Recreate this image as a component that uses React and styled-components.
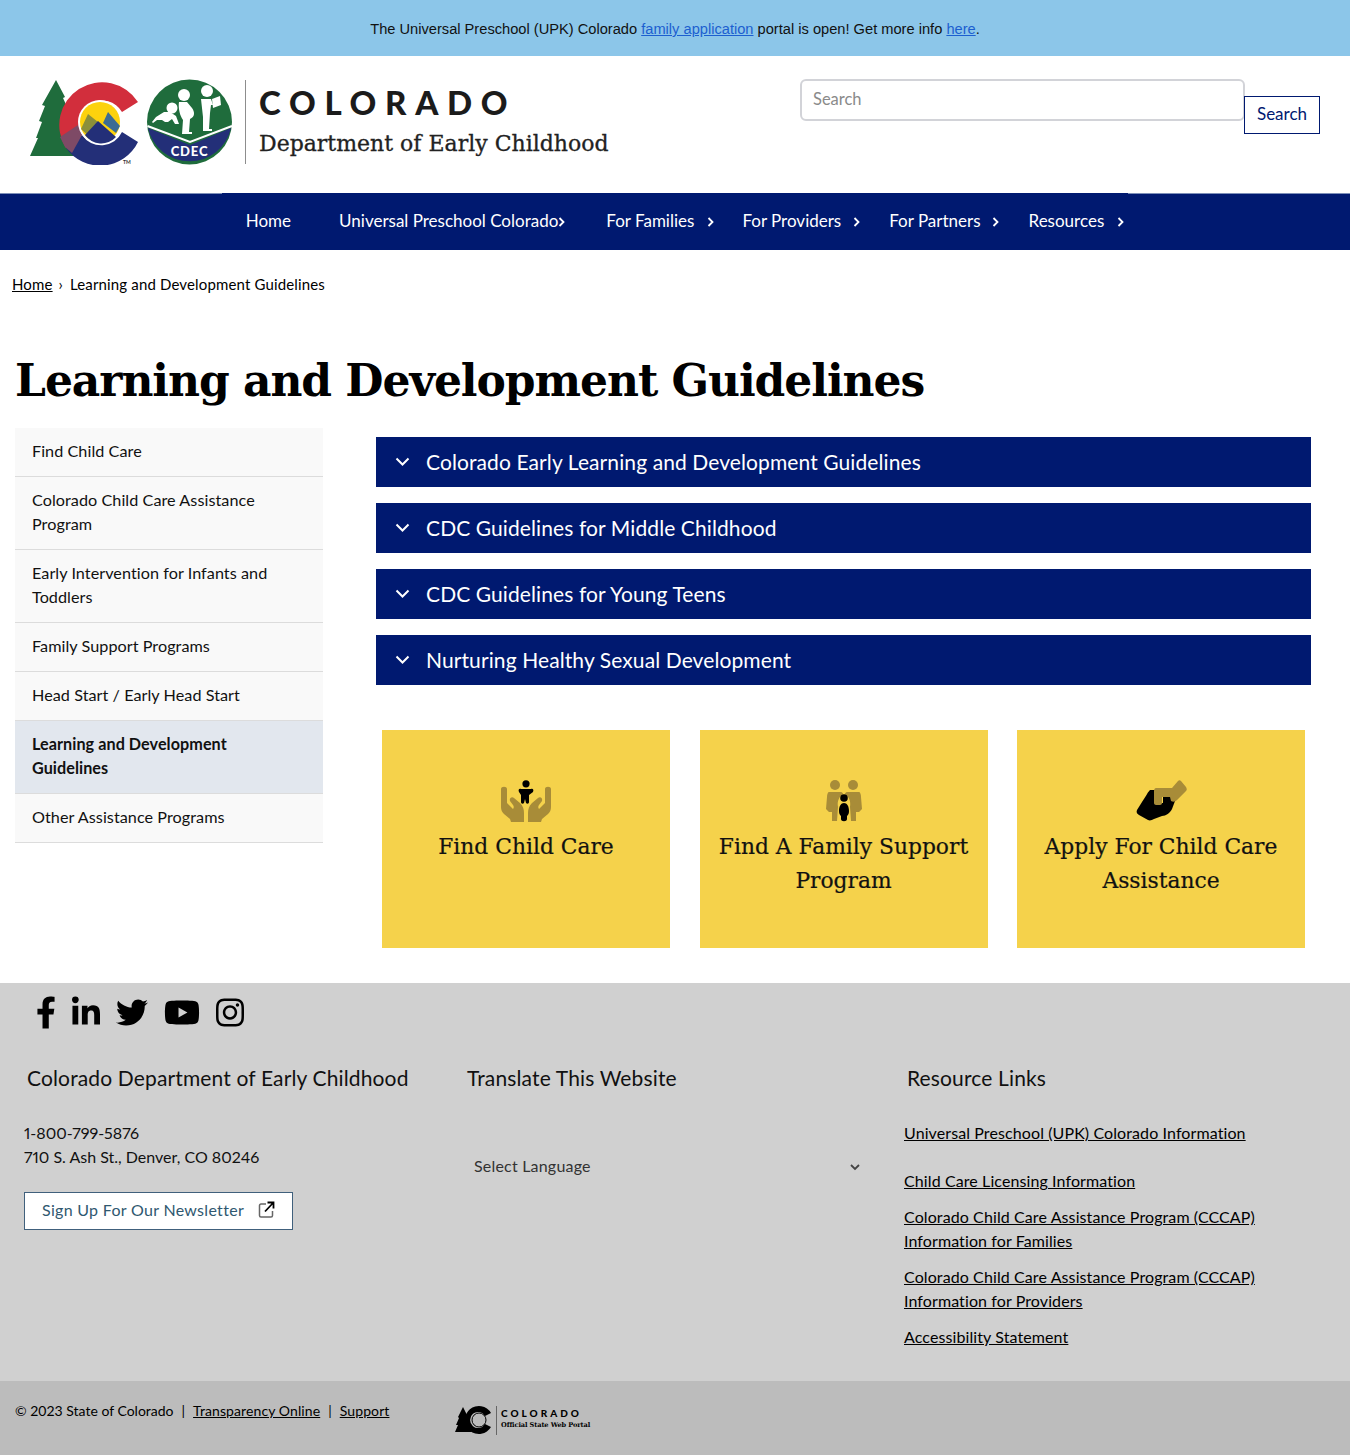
import React from 'react';
import styled, { createGlobalStyle } from 'styled-components';
import { FaFacebookF, FaLinkedinIn, FaTwitter, FaYoutube, FaInstagram } from 'react-icons/fa';

const colors = {
    navy: '#001970',
    sky: '#8cc6e9',
    yellow: '#f5d24b',
    bronze: '#a88c38',
    footer: '#d0d0d0',
    footerBottom: '#bcbcbc',
};

const sans = '"Lato", "Noto Sans", sans-serif';
const slab = '"DejaVu Serif", "Liberation Serif", serif';

const GlobalStyle = createGlobalStyle`
    html, body {
        margin: 0;
        padding: 0;
        background: #fff;
        color: #000;
        font-family: ${sans};
        font-size: 16px;
    }
    * { box-sizing: border-box; }
`;

const Banner = styled.div`
    height: 56px;
    background: ${colors.sky};
    display: flex;
    align-items: center;
    justify-content: center;
    padding-top: 2px;
    font-family: "Liberation Sans", Arial, sans-serif;
    font-size: 14.65px;
    color: #111;
    a { color: #1c5fd0; text-decoration: underline; }
`;

const Header = styled.header`
    height: 137px;
    display: flex;
    justify-content: space-between;
    padding: 23px 30px 0;
`;

const Logo = styled.div`
    display: flex;
    align-items: flex-start;
`;

const LogoWords = styled.div`
    display: flex;
    flex-direction: column;
    margin-left: 13px;
    padding-top: 3px;
`;

const LogoState = styled.div`
    font-weight: 900;
    font-size: 33px;
    line-height: 40px;
    letter-spacing: 8.7px;
    color: #1b1b1b;
`;

const LogoDept = styled.div`
    font-family: ${slab};
    font-size: 22px;
    line-height: 44px;
    color: #222;
    -webkit-text-stroke: 0.3px #222;
`;

const SearchForm = styled.form`
    display: flex;
    align-items: flex-start;
`;

const SearchInput = styled.input`
    width: 445px;
    height: 42px;
    border: 2px solid #d2d3d8;
    border-radius: 6px;
    padding: 0 11px 3px;
    font-family: ${sans};
    font-size: 16.500px;
    &::placeholder { color: #8a8a8a; }
`;

const SearchButton = styled.button`
    width: 76px;
    height: 38px;
    margin-top: 17px;
    margin-left: -1px;
    padding: 0 0 3px;
    background: #fff;
    border: 1px solid ${colors.navy};
    color: ${colors.navy};
    font-family: ${sans};
    font-size: 17px;
`;

const NavBar = styled.nav`
    height: 57px;
    background:
        linear-gradient(to right, #7d8fb8 222px, ${colors.navy} 222px, ${colors.navy} 1128px, #7d8fb8 1128px) top / 100% 1px no-repeat,
        ${colors.navy};
    display: flex;
    justify-content: center;
`;

const NavList = styled.div`
    display: flex;
    align-items: center;
`;

const NavItem = styled.a`
    position: relative;
    margin: 0 24px;
    color: #fff;
    font-size: 17px;
    line-height: 24px;
    padding-bottom: 1px;
`;

const NavChevron = styled.svg`
    position: absolute;
    top: 8px;
    left: calc(100% + ${p => p.$offset}px);
    width: 7px;
    height: 10px;
`;

const Crumbs = styled.div`
    display: flex;
    align-items: center;
    padding: 10px 12px 0;
    height: 58px;
    font-size: 15px;
    letter-spacing: 0.15px;
    a { color: #000; text-decoration: underline; }
`;

const CrumbSep = styled.span`
    margin: 0 7px 0 6px;
`;

const Title = styled.h1`
    margin: 0;
    padding: 45px 15px 0;
    height: 120px;
    font-family: ${slab};
    font-size: 44px;
    line-height: 56px;
    letter-spacing: -1.05px;
    font-weight: 700;
    color: #000;
`;

const Columns = styled.div`
    display: flex;
    align-items: flex-start;
    padding-left: 15px;
    height: 555px;
`;

const Sidebar = styled.aside`
    width: 308px;
    flex: none;
`;

const SideLink = styled.a`
    display: block;
    padding: 11px 31px 13px 17px;
    background: ${p => (p.$active ? '#e2e7ee' : '#f9f9f9')};
    border-bottom: 1px solid #dcdcdc;
    font-size: 16.200px;
    line-height: 24px;
    letter-spacing: 0.05px;
    font-weight: ${p => (p.$active ? 700 : 400)};
    color: #111;
`;

const Main = styled.main`
    margin-left: 53px;
    width: 935px;
    padding-top: 9px;
`;

const Accordion = styled.div`
    display: flex;
    flex-direction: column;
    gap: 16px;
`;

const AccordionRow = styled.div`
    height: 50px;
    background: ${colors.navy};
    display: flex;
    align-items: center;
    padding: 0 0 2px 19px;
    color: #fff;
    font-size: 21px;
    letter-spacing: 0.1px;
`;

const AccordionChevron = styled.svg`
    width: 15px;
    height: 9px;
    margin-right: 16px;
`;

const Cards = styled.div`
    display: grid;
    grid-template-columns: repeat(3, 288px);
    column-gap: 29.5px;
    margin: 45px 0 0 6px;
`;

const Card = styled.a`
    height: 218px;
    background: ${colors.yellow};
    display: flex;
    flex-direction: column;
    align-items: center;
    padding: 50px 15px 0;
    text-align: center;
    font-family: ${slab};
    font-size: 21.800px;
    line-height: 34px;
    color: #111;
    -webkit-text-stroke: 0.2px #111;
`;

const CardIcon = styled.svg`
    width: 52px;
    height: 42px;
    margin-bottom: 8px;
`;

const Footer = styled.footer`
    background: ${colors.footer};
    height: 398px;
    padding: 10px 24px 0;
`;

const Socials = styled.div`
    display: flex;
    align-items: center;
    height: 38px;
    padding-left: 12px;
    gap: 16px;
    color: #000;
`;

const Social = styled.span`
    display: flex;
    width: ${p => p.$width}px;
    svg {
        width: 100%;
        height: 33px;
    }
`;

const FooterCols = styled.div`
    display: flex;
    margin-top: 35px;
`;

const FooterCol = styled.div`
    width: ${p => p.$width}px;
    flex: none;
`;

const FooterHeading = styled.h2`
    margin: 0 0 31px ${p => p.$indent || 0}px;
    font-size: 21px;
    letter-spacing: 0.14px;
    font-weight: 400;
    line-height: 24px;
    color: #111;
`;

const FooterText = styled.div`
    font-size: 16px;
    line-height: 24px;
    font-variant-numeric: proportional-nums;
    color: #111;
`;

const Newsletter = styled.a`
    display: inline-flex;
    align-items: center;
    justify-content: space-between;
    width: 269px;
    height: 38px;
    margin-top: 23px;
    padding: 0 17px 3px;
    background: #fff;
    border: 1px solid #40607c;
    color: #2f5870;
    font-size: 16px;
    letter-spacing: 0.3px;
`;

const LanguageSelect = styled.div`
    display: flex;
    align-items: center;
    justify-content: space-between;
    width: 386px;
    margin: 66px 0 0 7px;
    font-size: 16px;
    letter-spacing: 0.2px;
    color: #333;
    svg { margin-top: 3px; }
`;

const ResourceLink = styled.a`
    display: block;
    margin-bottom: ${p => p.$gap}px;
    font-size: 16px;
    line-height: 24px;
    letter-spacing: 0.1px;
    color: #000;
    text-decoration: underline;
`;

const FooterBottom = styled.div`
    height: 74px;
    background: ${colors.footerBottom};
    display: flex;
    align-items: flex-start;
    padding: 21px 15px 0;
    font-size: 14px;
    color: #000;
    a { color: #000; text-decoration: underline; letter-spacing: 0.1px; }
`;

const Legal = styled.div`
    width: 440px;
    line-height: 17px;
`;

const Pipe = styled.span`
    margin: 0 8px;
`;

const PortalLogo = styled.div`
    display: flex;
    align-items: center;
    margin-top: 3px;
`;

const PortalWords = styled.div`
    margin-left: 3px;
    padding-left: 4px;
    border-left: 1px solid #666;
    height: 29px;
`;

const PortalState = styled.div`
    font-size: 10px;
    font-weight: 900;
    line-height: 14px;
    letter-spacing: 3px;
`;

const PortalSub = styled.div`
    font-family: ${slab};
    font-size: 6.600px;
    line-height: 11px;
    font-weight: 700;
    letter-spacing: -0.1px;
`;

const navItems = [
    ['Home', null],
    ['Universal Preschool Colorado', 0],
    ['For Families', 13],
    ['For Providers', 12],
    ['For Partners', 11],
    ['Resources', 13],
];

const sideItems = [
    'Find Child Care',
    'Colorado Child Care Assistance Program',
    'Early Intervention for Infants and Toddlers',
    'Family Support Programs',
    'Head Start / Early Head Start',
    'Learning and Development Guidelines',
    'Other Assistance Programs',
];

const accordionItems = [
    'Colorado Early Learning and Development Guidelines',
    'CDC Guidelines for Middle Childhood',
    'CDC Guidelines for Young Teens',
    'Nurturing Healthy Sexual Development',
];

const resourceLinks = [
    ['Universal Preschool (UPK) Colorado Information', 24],
    ['Child Care Licensing Information', 12],
    ['Colorado Child Care Assistance Program (CCCAP) Information for Families', 12],
    ['Colorado Child Care Assistance Program (CCCAP) Information for Providers', 12],
    ['Accessibility Statement', 0],
];

const socials = [
    [FaFacebookF, 20],
    [FaLinkedinIn, 28],
    [FaTwitter, 32],
    [FaYoutube, 36],
    [FaInstagram, 28],
];

const handPath = 'M1 9c0-3 6-3 6 0v14l6 6c1-1 1-3 0-4l-3-4c-1-3 2-5 4-3l6 5c3 3 4 6 4 10v9H11l-1-3-6-5c-2-2-3-4-3-7z';

const HandsIcon = () => (
    <CardIcon viewBox="0 0 52 42">
        <path fill={colors.bronze} d={handPath} />
        <path fill={colors.bronze} d={handPath} transform="matrix(-1 0 0 1 52 0)" />
        <circle cx="26" cy="3.800" r="3.600" fill="#000" />
        <path fill="#000" d="M19 12c-1-2 0-4 2-3l2 0h6l2 0c2-1 3 1 2 3l-4 3v7c0 2-2 2-3 1l-1-4-1 4c-1 1-3 1-3-1v-7z" />
    </CardIcon>
);

const FamilyIcon = () => (
    <CardIcon viewBox="0 0 52 42">
        <circle cx="17" cy="5" r="5" fill={colors.bronze} />
        <circle cx="35" cy="5" r="5" fill={colors.bronze} />
        <path fill={colors.bronze} d="M11 12h12c1 0 2 1 2 2-4 3-6 7-5 13l-1 14h-5v-9h-3l-3-3 1-12c0-3 1-5 2-5z" />
        <path fill={colors.bronze} d="M41 12H29c-1 0-2 1-2 2 4 3 6 7 5 13l1 14h5v-9h3l3-3-1-12c0-3-1-5-2-5z" />
        <circle cx="26" cy="18" r="3.800" fill="#000" />
        <path fill="#000" d="M26 23c3 0 5 3 5 8 0 3-1 4-2 5v3c0 3-6 3-6 0v-3c-1-1-2-2-2-5 0-5 2-8 5-8z" />
    </CardIcon>
);

const HandshakeIcon = () => (
    <CardIcon viewBox="0 0 52 42">
        <path fill="#000" d="M15 10c-3 3-5 8-8 12l-5 8c-1 2 0 4 2 5l9 5c2 1 4 0 6-1l8-3c4 0 8-3 10-7l3-8c0-3-2-4-4-4l-8 0v6h-7V10z" />
        <path fill={colors.bronze} d="M21 8h16l6-7c1-1 2-1 3 0l5 6c1 2 1 3 0 4l-9 9c-2 2-4 2-6 1l-1-4-8 0v6c0 1-1 2-2 2h-4c-1 0-2-1-2-2V11c0-2 1-3 2-3z" />
    </CardIcon>
);

const cards = [
    ['Find Child Care', HandsIcon],
    ['Find A Family Support Program', FamilyIcon],
    ['Apply For Child Care Assistance', HandshakeIcon],
];

const StateMark = () => (
    <svg width="216" height="86" viewBox="30 80 216 86">
        <path fill="#1f6c3c" d="M56 81l9 17-2 1 6 13-2 1 5 14 8 30H30l8-18-2 0 6-16-3-1 6-15-3-1z" />
        <path fill="#d22e3c" d="M138 103A42 42 0 1 0 66 149L82 136A23 23 0 1 1 122 113Z" />
        <path fill="#232f78" d="M138 143A42 42 0 0 1 66 149L82 136A23 23 0 0 0 122 133Z" />
        <path fill="#7e4a66" d="M72 154L65 148 60 138 78 126 82 136Z" />
        <circle cx="100" cy="123" r="22" fill="#fff" />
        <circle cx="100" cy="123" r="20" fill="#fcd20d" />
        <path fill="#8b8f3a" d="M81 130l7-15 10 8-6 17z" />
        <path fill="#3c6c94" d="M103 124l5-11 12 14-4 7z" />
        <path fill="#232f78" d="M85 136l13-14 18 16a20 20 0 0 1-31-2z" />
        <text x="123" y="165" fontSize="5" fontFamily="Lato, sans-serif" fontWeight="700" fill="#333">TM</text>
        <circle cx="189.500" cy="123" r="42.500" fill="#1f6c3c" />
        <path fill="#232f78" d="M148 129l42 17 41-17a42.500 42.500 0 0 1-83 0z" />
        <path fill="none" stroke="#fff" strokeWidth="2" d="M147.500 127l42.500 16 42-16" />
        <text x="189.500" y="157" textAnchor="middle" fontSize="13" fontFamily="Lato, sans-serif" fontWeight="900" letterSpacing="0.8" fill="#fff">CDEC</text>
        <circle cx="172" cy="109" r="5.500" fill="#fff" />
        <path fill="#fff" d="M152 123l4-5 8-5 6 0 6 4 3 8-4 0-3-5-4 3-3 0-3-2-5 0-4 3z" />
        <circle cx="184" cy="96" r="6" fill="#fff" />
        <path fill="#fff" d="M179 103h8l5 6c3 4 3 9-2 11l-1 13h3v2h-10l1-14c-3-4-5-12-4-18z" />
        <circle cx="207" cy="92" r="6" fill="#fff" />
        <path fill="#fff" d="M201 100h10l2 6h-2l-1 8-1 16h3v2h-9l0-14-2-18z" />
        <path fill="#fff" d="M212 100l8-3 1 9-8 3z" />
        <path fill="#8d8d8d" d="M245 81h2v84h-2z" />
    </svg>
);

const PortalMark = () => (
    <svg width="38" height="30" viewBox="0 0 38 30">
        <path fill="#000" d="M8 2l3 6 1 5 3 10 2 4H0l3-7-2 0 3-7-1-1 3-6z" />
        <path fill="#000" d="M36 8A14 14 0 1 0 36 22L30 19A8 8 0 1 1 30 11z" />
        <circle cx="24" cy="15" r="7" fill="none" stroke="#000" strokeWidth="1" />
    </svg>
);

const Chevron = ({ offset }) => (
    <NavChevron $offset={offset} viewBox="0 0 7 10">
        <path d="M1.500 1l4 4-4 4" fill="none" stroke="#fff" strokeWidth="1.800" />
    </NavChevron>
);

const App = () => (
    <>
        <GlobalStyle />
        <Banner>
            <span>
                The Universal Preschool (UPK) Colorado <a href="#a">family application</a> portal is open! Get more info <a href="#b">here</a>.
            </span>
        </Banner>
        <Header>
            <Logo>
                <StateMark />
                <LogoWords>
                    <LogoState>COLORADO</LogoState>
                    <LogoDept>Department of Early Childhood</LogoDept>
                </LogoWords>
            </Logo>
            <SearchForm>
                <SearchInput placeholder="Search" />
                <SearchButton type="button">Search</SearchButton>
            </SearchForm>
        </Header>
        <NavBar>
            <NavList>
                {navItems.map(([label, offset]) => (
                    <NavItem key={label}>
                        {label}
                        {offset !== null && <Chevron offset={offset} />}
                    </NavItem>
                ))}
            </NavList>
        </NavBar>
        <Crumbs>
            <a href="#home">Home</a>
            <CrumbSep>›</CrumbSep>
            Learning and Development Guidelines
        </Crumbs>
        <Title>Learning and Development Guidelines</Title>
        <Columns>
            <Sidebar>
                {sideItems.map((item, i) => (
                    <SideLink key={item} $active={i === 5}>{item}</SideLink>
                ))}
            </Sidebar>
            <Main>
                <Accordion>
                    {accordionItems.map(item => (
                        <AccordionRow key={item}>
                            <AccordionChevron viewBox="0 0 15 9">
                                <path d="M1.500 1.500l6 6 6-6" fill="none" stroke="#fff" strokeWidth="2" />
                            </AccordionChevron>
                            {item}
                        </AccordionRow>
                    ))}
                </Accordion>
                <Cards>
                    {cards.map(([label, Icon]) => (
                        <Card key={label}>
                            <Icon />
                            {label}
                        </Card>
                    ))}
                </Cards>
            </Main>
        </Columns>
        <Footer>
            <Socials>
                {socials.map(([Icon, width]) => (
                    <Social key={width} $width={width}>
                        <Icon />
                    </Social>
                ))}
            </Socials>
            <FooterCols>
                <FooterCol $width={443}>
                    <FooterHeading $indent={3}>Colorado Department of Early Childhood</FooterHeading>
                    <FooterText>
                        1-800-799-5876
                        <br />
                        710 S. Ash St., Denver, CO 80246
                    </FooterText>
                    <Newsletter>
                        Sign Up For Our Newsletter
                        <svg width="17" height="17" viewBox="0 0 17 17">
                            <path d="M8 3H3a1.500 1.500 0 0 0-1.500 1.500v10A1.500 1.500 0 0 0 3 16h10a1.500 1.500 0 0 0 1.500-1.500V10" fill="none" stroke="#666" strokeWidth="1.500" />
                            <path d="M7 10.500L15 2M9.500 1.500H15.500V7.500" fill="none" stroke="#000" strokeWidth="1.800" />
                        </svg>
                    </Newsletter>
                </FooterCol>
                <FooterCol $width={437}>
                    <FooterHeading>Translate This Website</FooterHeading>
                    <LanguageSelect>
                        Select Language
                        <svg width="10" height="7" viewBox="0 0 10 7">
                            <path d="M1 1l4 4 4-4" fill="none" stroke="#444" strokeWidth="1.800" />
                        </svg>
                    </LanguageSelect>
                </FooterCol>
                <FooterCol $width={400}>
                    <FooterHeading $indent={3}>Resource Links</FooterHeading>
                    {resourceLinks.map(([label, gap]) => (
                        <ResourceLink key={label} $gap={gap}>{label}</ResourceLink>
                    ))}
                </FooterCol>
            </FooterCols>
        </Footer>
        <FooterBottom>
            <Legal>
                © 2023 State of Colorado<Pipe>|</Pipe>
                <a href="#t">Transparency Online</a><Pipe>|</Pipe>
                <a href="#s">Support</a>
            </Legal>
            <PortalLogo>
                <PortalMark />
                <PortalWords>
                    <PortalState>COLORADO</PortalState>
                    <PortalSub>Official State Web Portal</PortalSub>
                </PortalWords>
            </PortalLogo>
        </FooterBottom>
    </>
);

export default App;
